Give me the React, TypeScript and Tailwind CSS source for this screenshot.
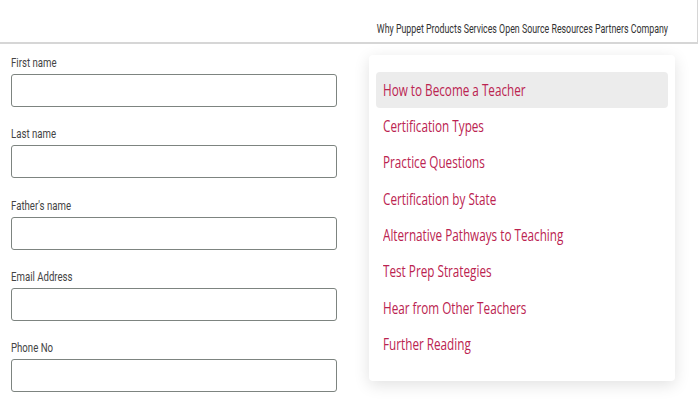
import React from "react";

const navItems = [
  "Why Puppet",
  "Products",
  "Services",
  "Open Source",
  "Resources",
  "Partners",
  "Company",
];

const fields = ["First name", "Last name", "Father's name", "Email Address", "Phone No"];

const links = [
  "How to Become a Teacher",
  "Certification Types",
  "Practice Questions",
  "Certification by State",
  "Alternative Pathways to Teaching",
  "Test Prep Strategies",
  "Hear from Other Teachers",
  "Further Reading",
];

export default function App() {
  return (
    <main className="h-[400px] w-[700px] overflow-hidden bg-white">
      {/* top nav */}
      <header className="flex h-[44px] w-[698px] items-end justify-end border-r border-b-2 border-[#d6d6d6] pr-[29px] pb-[6px]">
        <nav className="origin-right scale-x-[0.69] whitespace-nowrap font-['Roboto',sans-serif] text-[12.8px] leading-[14px] text-[#333]">
          {navItems.join(" ")}
        </nav>
      </header>

      <div className="flex">
        {/* form */}
        <form className="flex w-[336px] flex-col pt-[11px] pl-[11px]">
          {fields.map((label) => (
            <div key={label} className="flex h-[71.3px] flex-col">
              <label className="h-[19px] origin-left scale-x-[0.74] whitespace-nowrap font-['Roboto',sans-serif] text-[13px] leading-[16px] text-[#444]">
                {label}
              </label>
              <input
                type="text"
                className="h-[33px] w-[326px] rounded-[3px] border border-[#7d8480] bg-white"
              />
            </div>
          ))}
        </form>

        {/* side menu */}
        <aside className="mt-[11px] ml-[33px] h-[326px] w-[306px] rounded-[4px] bg-white px-[7px] pt-[17px] shadow-[0_4px_16px_rgba(0,0,0,0.12)]">
          <ul className="flex flex-col">
            {links.map((text, i) => (
              <li
                key={text}
                className={`flex h-[36.3px] items-center rounded-[4px] px-[7px] ${i === 0 ? "bg-[#ececec]" : ""}`}
              >
                <span className="origin-left scale-x-[0.71] whitespace-nowrap font-['Open_Sans',sans-serif] text-[16.5px] text-[#bb2350]">
                  {text}
                </span>
              </li>
            ))}
          </ul>
        </aside>
      </div>
    </main>
  );
}
